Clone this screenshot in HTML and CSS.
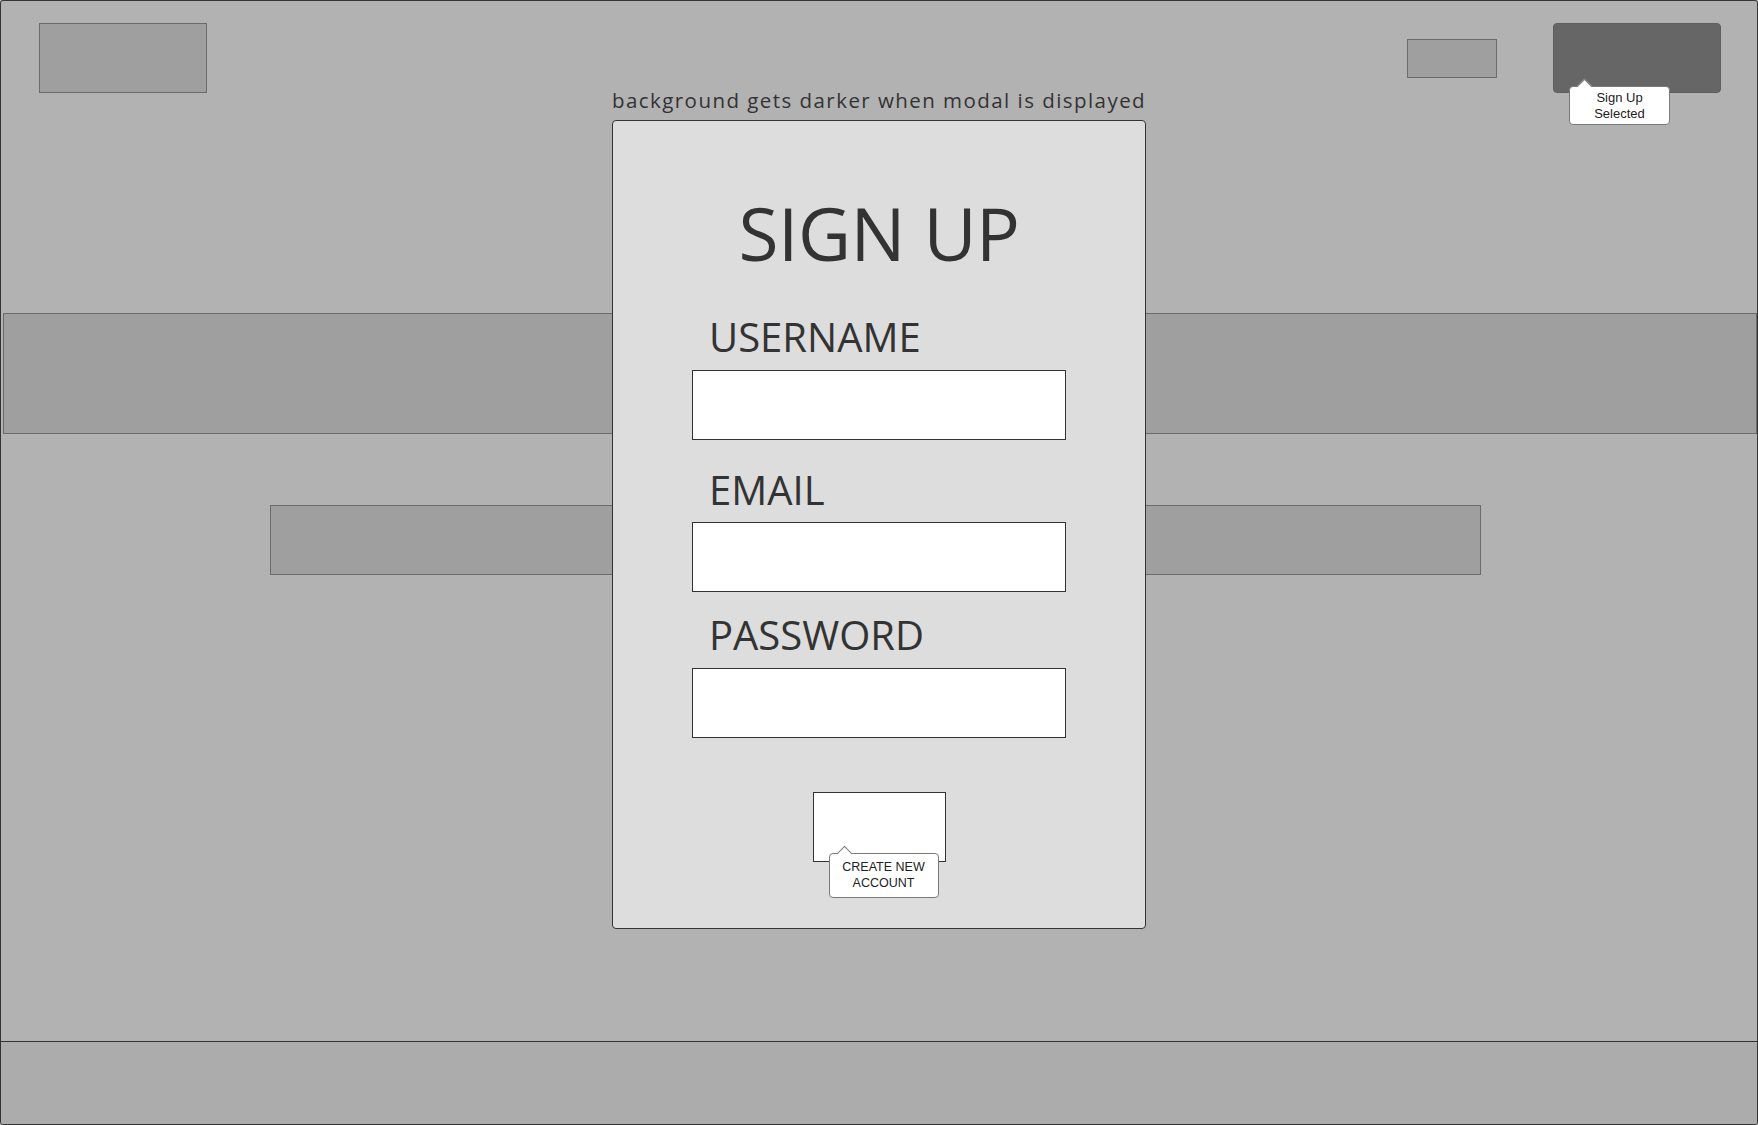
FILE: index.html
```html
<!DOCTYPE html>
<html lang="en">
<head>
<meta charset="utf-8">
<title>Sign Up modal wireframe</title>
<link rel="stylesheet" href="styles.css">
</head>
<body>
<div class="frame">
  <header class="header">
    <div class="logo"></div>
    <div class="header-right">
      <div class="nav-box"></div>
      <div class="signup-btn">
        <div class="callout callout-top">Sign Up<br>Selected</div>
      </div>
    </div>
  </header>
  <div class="hero-band"></div>
  <div class="sub-band"></div>
  <footer class="footer"></footer>

  <div class="overlay">
    <p class="note">background gets darker when modal is displayed</p>
    <div class="modal">
      <h1 class="modal-title">SIGN UP</h1>
      <form class="form">
        <label class="field-label field-username">USERNAME</label>
        <div class="field-input"></div>
        <label class="field-label field-email">EMAIL</label>
        <div class="field-input field-input-email"></div>
        <label class="field-label field-password">PASSWORD</label>
        <div class="field-input"></div>
      </form>
      <div class="submit-btn">
        <div class="callout callout-submit">CREATE NEW<br>ACCOUNT</div>
      </div>
    </div>
  </div>
</div>
</body>
</html>
```

FILE: styles.css
```css
html, body {
  margin: 0;
  padding: 0;
}

body {
  font-family: "Open Sans", "Liberation Sans", sans-serif;
  color: #333333;
  background: #b2b2b2;
}

.frame {
  position: relative;
  box-sizing: border-box;
  width: 1758px;
  height: 1125px;
  border: 1px solid #333333;
  border-radius: 3px;
  background: #b2b2b2;
  display: flex;
  flex-direction: column;
  overflow: hidden;
}

/* header */
.header {
  display: flex;
  justify-content: space-between;
  align-items: center;
  padding: 22px 36px 0 38px;
}

.logo {
  box-sizing: border-box;
  width: 168px;
  height: 70px;
  background: #9f9f9f;
  border: 1px solid #6b6b6b;
}

.header-right {
  display: flex;
  align-items: center;
  gap: 56px;
}

.nav-box {
  box-sizing: border-box;
  width: 90px;
  height: 39px;
  background: #9f9f9f;
  border: 1px solid #6b6b6b;
}

.signup-btn {
  position: relative;
  box-sizing: border-box;
  width: 168px;
  height: 70px;
  background: #666666;
  border: 1px solid #5f5f5f;
  border-radius: 4px;
}

/* bands */
.hero-band {
  box-sizing: border-box;
  height: 121px;
  margin: 220px 0 0 2px;
  background: #9f9f9f;
  border: 1px solid #6b6b6b;
}

.sub-band {
  box-sizing: border-box;
  width: 1211px;
  height: 70px;
  margin: 71px 0 0 269px;
  background: #9f9f9f;
  border: 1px solid #6b6b6b;
}

.footer {
  box-sizing: border-box;
  margin-top: auto;
  height: 83px;
  background: #acacac;
  border-top: 1px solid #333333;
}

/* callouts (tooltips) */
.callout {
  position: absolute;
  box-sizing: border-box;
  display: flex;
  align-items: center;
  justify-content: center;
  text-align: center;
  background: #ffffff;
  border: 1px solid #7a7a7a;
  border-radius: 4px;
  font-family: "Liberation Sans", Arial, sans-serif;
  color: #222222;
  line-height: 15.5px;
  z-index: 2;
}

.callout::before {
  content: "";
  position: absolute;
  box-sizing: border-box;
  width: 11px;
  height: 11px;
  top: -6px;
  background: #ffffff;
  border-top: 1px solid #7a7a7a;
  border-left: 1px solid #7a7a7a;
  transform: rotate(45deg);
}

.callout-top {
  left: 15px;
  top: 62px;
  width: 101px;
  height: 39px;
  font-size: 13px;
}

.callout-top::before {
  left: 8.5px;
}

.callout-submit {
  left: 15px;
  top: 60px;
  width: 110px;
  height: 45px;
  font-size: 12.5px;
}

.callout-submit::before {
  left: 9.5px;
}

/* overlay + modal */
.overlay {
  position: absolute;
  top: 0;
  left: 0;
  right: 0;
  display: flex;
  flex-direction: column;
  align-items: center;
  padding-top: 87px;
}

.note {
  margin: 0 0 8px 0;
  font-size: 20.5px;
  font-weight: 500;
  line-height: 24px;
  letter-spacing: 1.45px;
  color: #333333;
  white-space: nowrap;
}

.modal {
  box-sizing: border-box;
  width: 534px;
  height: 809px;
  padding-top: 75px;
  background: #dddddd;
  border: 1px solid #333333;
  border-radius: 4px;
  display: flex;
  flex-direction: column;
  align-items: center;
}

.modal-title {
  margin: 0;
  font-size: 73px;
  line-height: 74px;
  font-weight: 500;
  letter-spacing: -0.5px;
  color: #333333;
}

.form {
  width: 374px;
  display: flex;
  flex-direction: column;
  margin: 0;
}

.field-label {
  display: block;
  padding-left: 17px;
  font-size: 40px;
  font-weight: 500;
  line-height: 40px;
  color: #333333;
}

.field-username { margin-top: 47px; }
.field-email { margin-top: 30px; }
.field-password { margin-top: 23px; }

.field-input {
  box-sizing: border-box;
  height: 70px;
  margin-top: 13px;
  background: #ffffff;
  border: 1px solid #333333;
}

.field-input-email { margin-top: 12px; }

.submit-btn {
  position: relative;
  box-sizing: border-box;
  width: 133px;
  height: 70px;
  margin-top: 54px;
  background: #ffffff;
  border: 1px solid #333333;
}
```
